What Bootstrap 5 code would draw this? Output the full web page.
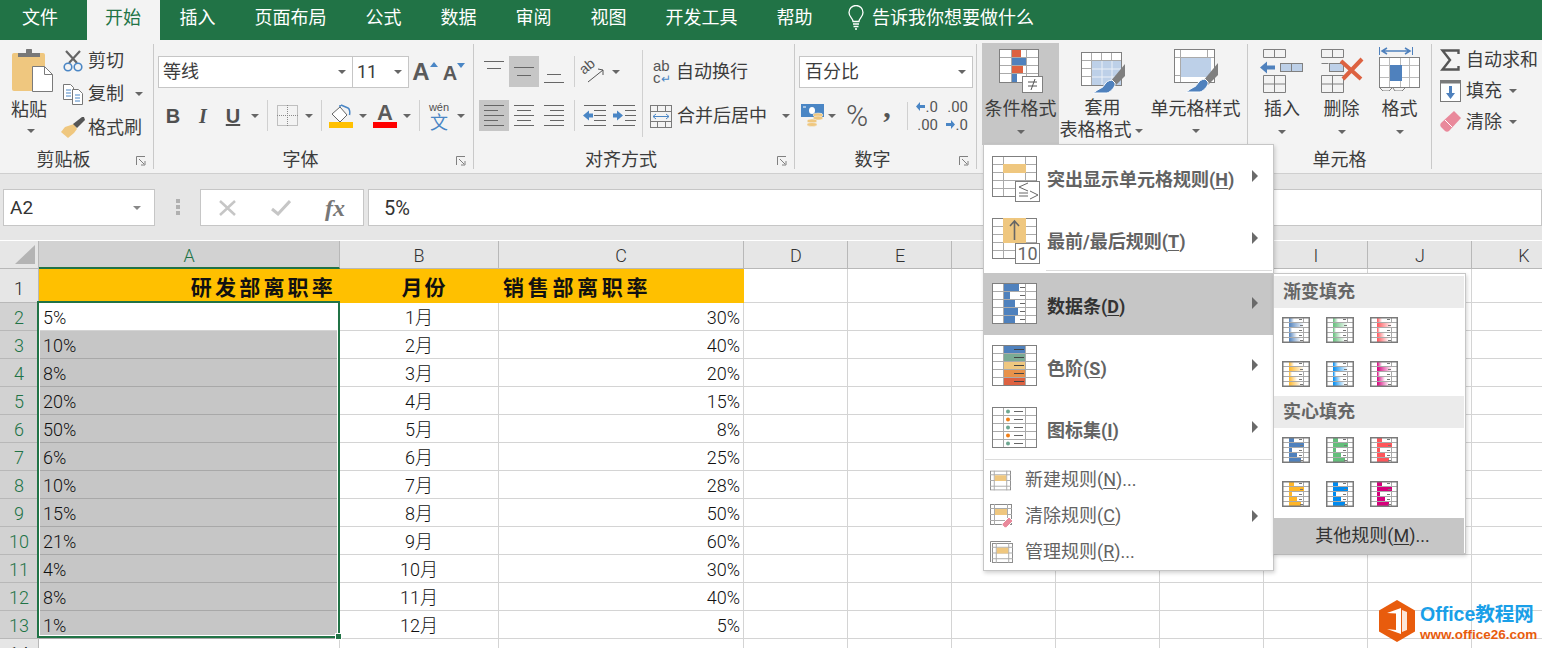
<!DOCTYPE html>
<html lang="zh-CN">
<head>
<meta charset="utf-8">
<title>Excel</title>
<link href="https://cdn.jsdelivr.net/npm/bootstrap@5.3.0/dist/css/bootstrap.min.css" rel="stylesheet">
<style>
html,body{margin:0;background:#fff}
.xl{width:1542px;height:648px;overflow:hidden;position:relative;font-family:Roboto,"Noto Sans CJK SC",sans-serif;font-size:18px;line-height:24px;color:#3c3c3c}
svg{display:block;flex:none}
/* tabs */
.xtabs{height:40px;background:#217346;flex-wrap:nowrap}
.xtabs .nav-link{color:#fff;padding:0 19.5px;line-height:36px;height:40px;border:0;white-space:nowrap}
.xtabs .nav-item:first-child .nav-link{padding:0 29px 0 22px}
.xtabs .nav-link.active{background:#f3f3f3;color:#217346;padding:0 19px 0 18px}
.xbulb{margin:5px 8px 0 16px}
.asktxt{line-height:36px;color:#fff}
/* ribbon */
.xrib{height:134px;background:#f3f3f3;border-bottom:1px solid #cfcfcf}
.rg{height:125px;margin-top:4px;border-right:1px solid #c9c9c9;display:flex;flex-direction:column;flex:none}
.rb{height:101px;display:flex;flex:none}
.rl{height:24px;padding-top:3px;display:grid;grid-template-columns:1fr auto 1fr 26px}
.rl span{grid-column:2}
.rl svg{grid-column:4;justify-self:end;align-self:center;margin:2px 7px 0 0}
.rl.plainlbl{grid-template-columns:1fr auto 1fr}
.g1{width:154px}.g2{width:320px}.g3{width:321px}.g4{width:182px}.g5{width:271px}.g6{width:184px}.g7{width:110px;border-right:0}
.ptcol{width:62px;padding-top:5px}
.ptcol svg{margin-left:12px}
.ptxt{padding-left:11px;line-height:24px;margin-top:6px}
.crb{height:15px;display:flex;justify-content:center;align-items:center;margin-top:3px}
.ptcol .crb{margin-top:1px;width:62px}
.smrow{height:33.5px;display:flex;align-items:center;gap:4px}
.smico{width:22px;display:flex;justify-content:center}
.cr{width:14px;height:31px;display:flex;align-items:center;justify-content:center;flex:none}
.cr.tiny{display:inline-flex;height:16px;vertical-align:middle}
.cr::after,.crb::after{content:"";border-style:solid;border-width:4px 4px 0;border-color:#666 transparent transparent}
.ib{width:30px;height:31px;display:flex;align-items:center;justify-content:center;flex:none;color:#505050}
.ib.on{background:#c6c6c6}
.ib.top{align-items:flex-start;padding-top:5px}
.ib.bot{align-items:flex-end;padding-bottom:4px}
.vs{width:1px;height:31px;background:#d0d0d0;margin:0 4px 0 5px;flex:none}
.r1{padding-top:12px;height:44px;display:flex;align-items:flex-start}
.r2{margin-top:12px;height:31px;display:flex}
.ind{margin-left:4px}
.selbox{height:32px;background:#fff;border:1px solid #c6c6c6;display:flex;align-items:center;justify-content:space-between;padding:0 6px 0 4px;flex:none}
.selbox::after{content:"";border-style:solid;border-width:4px 4px 0;border-color:#666 transparent transparent}
.fbox{width:195px;margin-left:4px}.sbox{width:57px;margin-left:-1px}
.agrow{font-family:"Liberation Sans",sans-serif;font-weight:700;color:#5a5a5a;position:relative}
.agrow svg{margin:-14px -2px 0 0}
.hA{font-size:24px;margin-left:3px;width:24px}.hB{font-size:20px;padding-top:2px;margin-left:4px;width:26px}
.wen{font-size:11px;line-height:12px;text-align:center;color:#505050;font-family:"Liberation Sans",sans-serif}
.wen b{display:block;color:#4a86c5;font-size:18px;line-height:17px;font-weight:400;font-family:"Noto Sans CJK SC",sans-serif}
.bi{font:700 20px/24px "Liberation Sans",sans-serif}
.it{font:italic 700 20px/24px "Liberation Serif",serif}
.un{font:700 20px/24px "Liberation Sans",sans-serif;text-decoration:underline}
.colorA{flex-direction:column}
.colorA span{font:700 22px/18px "Liberation Sans",sans-serif;color:#5a5a5a}
.al3l{width:168px;padding-left:5px}
.al3r{border-left:1px solid #d0d0d0;height:87px;margin-top:6px;padding-left:7px}
.wr{height:32px;margin-top:6px;display:flex;align-items:center;gap:3px;white-space:nowrap}
.wr.m2{margin-top:12px;gap:5px}
.wr.m2 .cr{margin-left:7px}
.wrab{font:15px/12px "Liberation Sans",sans-serif;color:#555;width:20px;margin-left:3px}
.wrab em{font-style:normal;color:#4a86c5;font-size:12px}
.orient{overflow:visible}
.nbox{width:174px;margin:12px 0 0 4px;padding-left:5px}
.nrow{margin:12px 0 0 6px;display:flex;height:31px;align-items:center}
.pc{font:300 30px/31px Roboto,sans-serif;color:#555;width:24px;margin-left:6px;text-align:center}
.cm{font:700 30px/14px "Liberation Serif",serif;color:#555;width:36px;text-align:center;height:31px}
.dec{font:15px/18px Roboto,sans-serif;color:#555;width:24px;display:flex;flex-direction:column;align-items:flex-end;margin-left:6px}
.dec span{display:flex;align-items:center;gap:1px;height:18px}
.dvs{width:1px;height:28px;background:#d0d0d0;margin-left:2px}
.bigb{display:flex;flex-direction:column;align-items:center;flex:none;height:101px;padding-top:5px;text-align:center}
.bigb.on{background:#c6c6c6;margin-top:-1px;height:102px;padding-top:6px}
.b1{width:77px;margin-left:5px}.b2{width:87px}.b3{width:99px}
.bico{height:44px;margin-bottom:4px;display:flex;align-items:flex-start}
.b2 .bico{padding-top:3px}
.ln2{white-space:nowrap;line-height:22px}
.b3 .crb{margin-top:2px}
.c1{width:60px;margin-left:4px}.c2{width:59px}.c3{width:57px}
.c3 svg{margin-top:-2px}
.tx3 .smrow{gap:5px;padding-left:7px;height:31px}
.tx3 .smrow:first-child{height:32px}
.tx3 .smrow:nth-child(2){height:30px}
.smcar{margin-left:-1px}
/* formula bar */
.xfb{height:66px;background:#e6e6e6;padding:15px 0 0 3px;display:flex}
.fb-b{height:37px;background:#fff;border:1px solid #c6c6c6;display:flex;align-items:center;flex:none}
.nm{width:152px;padding:0 13px 0 6px;justify-content:space-between;font-size:19px;color:#333}
.nm::after{content:"";border-style:solid;border-width:4px 4px 0;border-color:#888 transparent transparent}
.dots{width:45px;height:35px;display:flex;justify-content:center;align-items:center}
.fx{width:164px;padding-left:18px;gap:34px}
.fxt{font:italic 700 24px/24px "Liberation Serif",serif;color:#777}
.fi{flex:1;margin-left:4px;padding-left:15px;font-size:20px;color:#333}
/* sheet */
.sh{position:relative;height:408px;overflow:hidden;font-weight:300}
.gr{display:flex;height:28px;line-height:29px;color:#111}
.ghead{height:28px;margin-top:1px;line-height:30px;background:#e6e6e6;color:#333}
.ghead>div{border-right:1px solid #b8b8b8;border-bottom:1px solid #b8b8b8;text-align:center}
.r-h{width:39px;flex:none;background:#d2d2d2;color:#217346;text-align:center;border-right:1px solid #b8b8b8;border-bottom:1px solid #b8b8b8}
.r-h.plain{background:#e6e6e6;color:#222}
.ghead .r-h{background:#e6e6e6;display:flex;align-items:flex-end;justify-content:flex-end;padding:0 3px 4px 0}
.ghead .ca{background:#d2d2d2;color:#217346;border-bottom:2px solid #217346;padding:0}
.ghead .cc{padding:0;text-align:center}
.ca{width:301px;flex:none;padding-left:4px}
.cb{width:159px;flex:none;text-align:center}
.cc{width:245px;flex:none;text-align:right;padding-right:3px}
.rest{width:832px;flex:none}
.cs{height:28px;width:104px;flex:none}
.gd>div{border-right:1px solid #d4d4d4;border-bottom:1px solid #d4d4d4}
.gd .r-h{border-right-color:#b8b8b8;border-bottom-color:#b8b8b8}
.gd.dk .ca{background:#c6c6c6;border-bottom-color:#a8a8a8;border-right-color:#c6c6c6}
.rest{background:repeating-linear-gradient(90deg,transparent 0 103px,#d4d4d4 103px 104px)}
.ghead .rest{background:repeating-linear-gradient(90deg,transparent 0 103px,#b8b8b8 103px 104px);border-right:0;display:flex}
.gd .rest{border-right:0}
.gt{height:34px;line-height:38px;font-weight:700;color:#111;letter-spacing:3.2px;font-size:21px}
.gt .ca,.gt .cb,.gt .cc{background:#ffc000;border-color:#ffc000}
.gt .ca{text-align:right;padding:0 3px 0 0}
.gt .cb{letter-spacing:2px;padding-left:11px}
.gt .cc{text-align:left;padding-left:4px;letter-spacing:3.7px}
.gt .r-h{letter-spacing:0;font-size:18px;line-height:40px;font-weight:300}
.selr{position:absolute;left:37px;top:61px;width:303px;height:337px;border:2px solid #217346;outline:1px solid #fff;outline-offset:-3px;pointer-events:none}
.hdl{position:absolute;right:-4px;bottom:-4px;width:7px;height:7px;background:#217346;border:1px solid #fff}
/* menus */
.xl .dropdown-menu{position:absolute;display:block;margin:0;min-width:0;padding:1px 0 0;border:1px solid #c6c6c6;border-radius:0;background:#fff;box-shadow:1px 2px 4px rgba(0,0,0,.18);font-size:18px}
.m1{left:983px;top:144px;width:291px;height:427px}
.m2s{left:1273px;top:273px;width:193px;height:281px}
.xl .dropdown-item{padding:0;display:flex;color:#636363;white-space:nowrap;position:relative;background:transparent}
.bigi{height:62px;font-weight:700}
.xl .bigi.hov{background:#c6c6c6;color:#333}
.bigi>svg{margin:10px 7px 0 8px}
.bigi>svg text{font-weight:400}
.bigi>span{margin-top:22px}
.xl u{text-decoration:underline;text-underline-offset:2px}
.arr{margin:24px 15px 0 auto;width:0;height:0;border-style:solid;border-width:6px 0 6px 6px;border-color:transparent transparent transparent #6a6a6a}
.sepa{height:1px;background:#dcdcdc;margin:0 1px 2px 62px}
.sepb{height:1px;background:#dcdcdc;margin:0 1px 2px 1px}
.smi{height:36px;align-items:center;font-weight:400}
.smi>svg{margin:0 14px 0 6px}
.smi>svg.w24{margin-right:11px}
.smi>svg.w23{margin-right:12px}
.smi .arr{margin:0 15px 0 auto}
.mh{height:32px;line-height:32px;background:#ebebeb;color:#666;font-weight:700;padding-left:9px;margin:1px 1px 0 0}
.mh.nx{margin-top:0}
.mgrid{display:grid;grid-template-columns:repeat(3,28px);gap:18px 16px;padding:9px 8px}
.more{height:36px;background:#c6c6c6;margin:2px 1px 0 0;text-align:center;line-height:36px;color:#333;padding-left:7px}
/* watermark */
.wm{position:absolute;left:1379px;top:600px;display:flex;gap:5px;height:42px}
.wm1{font:700 19.5px/26px "Liberation Sans","Noto Sans CJK SC",sans-serif;color:#1a9fe8;margin-top:1px;white-space:nowrap}
.wm2{font:700 13.5px/15px "Liberation Sans",sans-serif;color:#e85c0d;white-space:nowrap}
</style>
</head>
<body>
<svg width="0" height="0" class="position-absolute">
<defs>
<linearGradient id="g1"><stop offset="0" stop-color="#4f81bd"/><stop offset="1" stop-color="#fff"/></linearGradient>
<linearGradient id="g2"><stop offset="0" stop-color="#63be7b"/><stop offset="1" stop-color="#fff"/></linearGradient>
<linearGradient id="g3"><stop offset="0" stop-color="#ff555a"/><stop offset="1" stop-color="#fff"/></linearGradient>
<linearGradient id="g4"><stop offset="0" stop-color="#ffb628"/><stop offset="1" stop-color="#fff"/></linearGradient>
<linearGradient id="g5"><stop offset="0" stop-color="#008aef"/><stop offset="1" stop-color="#fff"/></linearGradient>
<linearGradient id="g6"><stop offset="0" stop-color="#d6007b"/><stop offset="1" stop-color="#fff"/></linearGradient>
<symbol id="mini" viewBox="0 0 28 26">
<path d="M.5 5.500h27M.5 10.500h27M.5 15.500h27M.5 20.500h27M7.500 0v26M21.500 0v26" stroke="#aaa" fill="none"/>
<rect x="7" y="1" width="5" height="4"/><rect x="7" y="6" width="15" height="4"/><rect x="7" y="11" width="3" height="4"/><rect x="7" y="16" width="8" height="4"/><rect x="7" y="21" width="12" height="4"/>
<path d="M17 2.500h3M18 8.500h3M17 13.500h3M17 18.500h3M18 23.500h3" stroke="#777" fill="none"/>
<rect x=".75" y=".75" width="26.500" height="24.500" fill="none" stroke="#7a7a7a" stroke-width="1.500"/>
</symbol>
<symbol id="tb" viewBox="0 0 45 41">
<rect x=".5" y=".5" width="44" height="40" fill="#fff"/>
<path d="M0 8.500h45M0 16.500h45M0 24.500h45M0 32.500h45M11.500 0v41M33.500 0v41" stroke="#aaa"/>
<rect x=".5" y=".5" width="44" height="40" fill="none" stroke="#7f7f7f"/>
</symbol>
<symbol id="sm" viewBox="0 0 22 21">
<rect x=".5" y=".5" width="21" height="20" fill="#fff" stroke="#8a8a8a"/>
<path d="M0 4.500h22M0 10.500h22M0 16.500h22M4.500 0v21M17.500 0v21" stroke="#aaa"/>
<rect x="5" y="5" width="12" height="6" fill="#efc77f"/>
</symbol>
</defs>
</svg>
<div class="xl">
<ul class="nav xtabs">
<li class="nav-item"><a class="nav-link" href="#">文件</a></li>
<li class="nav-item"><a class="nav-link active" href="#">开始</a></li>
<li class="nav-item"><a class="nav-link" href="#">插入</a></li>
<li class="nav-item"><a class="nav-link" href="#">页面布局</a></li>
<li class="nav-item"><a class="nav-link" href="#">公式</a></li>
<li class="nav-item"><a class="nav-link" href="#">数据</a></li>
<li class="nav-item"><a class="nav-link" href="#">审阅</a></li>
<li class="nav-item"><a class="nav-link" href="#">视图</a></li>
<li class="nav-item"><a class="nav-link" href="#">开发工具</a></li>
<li class="nav-item"><a class="nav-link" href="#">帮助</a></li>
<li class="nav-item d-flex"><svg class="xbulb" width="16" height="25" viewBox="0 0 16 25" fill="none" stroke="#fff" stroke-width="1.300"><path d="M5 16.500C5 13.500 1 12 1 7.500a7 7 0 0 1 14 0c0 4.500-4 6-4 9z"/><path d="M5 19h6M5.500 21.500h5M7 24h2"/></svg><span class="asktxt">告诉我你想要做什么</span></li>
</ul>

<div class="xrib d-flex">
 <div class="rg g1">
  <div class="rb">
   <div class="ptcol">
    <svg width="41" height="43" viewBox="0 0 41 43"><rect x="0" y="4" width="33" height="38" rx="2" fill="#efc77f"/><path d="M6 8V4h8V1.500a3 3 0 0 1 6 0V4h8v4z" fill="#787878"/><path d="M20.500 17.500h12l8 8v17h-20z" fill="#fff" stroke="#7a7a7a"/><path d="M32.500 17.500v8h8" fill="none" stroke="#7a7a7a"/></svg>
    <div class="ptxt">粘贴</div>
    <div class="crb"></div>
   </div>
   <div>
    <div class="smrow"><span class="smico"><svg width="20" height="22" viewBox="0 0 20 22" fill="none"><path d="M3 1l11 12M17 1L6 13" stroke="#666" stroke-width="2.200"/><circle cx="5" cy="17" r="3.800" stroke="#4a86c5" stroke-width="1.600"/><circle cx="15" cy="17" r="3.800" stroke="#4a86c5" stroke-width="1.600"/></svg></span>剪切</div>
    <div class="smrow"><span class="smico"><svg width="20" height="21" viewBox="0 0 20 21" fill="#fff" stroke="#777"><path d="M.5.5h7l3 3v12H.5z"/><path d="M9.500 5.500h6l4 4v11h-10z"/><path d="M3 6h5M3 9h5M3 12h5M12 11h5M12 14h5M12 17h5" stroke="#4a86c5"/></svg></span>复制<span class="cr ms-1"></span></div>
    <div class="smrow"><span class="smico"><svg width="24" height="21" viewBox="0 0 24 21"><path d="M13 7L4 10l-4 5 7 6 6-5 3-4z" fill="#efc77f"/><path d="M12 7l4 4 8-8-1-3h-2z" fill="#555"/></svg></span>格式刷</div>
   </div>
  </div>
  <div class="rl"><span>剪贴板</span><svg width="10" height="10" viewBox="0 0 10 10" fill="none" stroke="#808080"><path d="M.5 9V.5H9"/><path d="M3 3l5 5M9 5v4H5"/></svg></div>
 </div>

 <div class="rg g2">
  <div class="rb flex-column">
   <div class="r1">
    <div class="selbox fbox"><span>等线</span></div>
    <div class="selbox sbox"><span>11</span></div>
    <div class="ib agrow hA">A<svg width="8" height="5" viewBox="0 0 8 5"><path d="M0 5l4-5 4 5z" fill="#4a86c5"/></svg></div>
    <div class="ib agrow hB">A<svg width="8" height="5" viewBox="0 0 8 5"><path d="M0 0l4 5 4-5z" fill="#4a86c5"/></svg></div>
   </div>
   <div class="r2 ind">
    <div class="ib bi">B</div><div class="ib it">I</div><div class="ib un">U</div><div class="cr"></div>
    <div class="vs"></div>
    <div class="ib"><svg width="21" height="21" viewBox="0 0 21 21" fill="none" stroke="#8a8a8a" stroke-dasharray="1 1"><path d="M.5.5h20v20H.5zM10.500 0v21M0 10.500h21"/></svg></div><div class="cr"></div>
    <div class="vs"></div>
    <div class="ib"><svg width="24" height="24" viewBox="0 0 24 24"><path d="M3 10l8-7 7 8-7 7z" fill="#fff" stroke="#666"/><path d="M11 3V1M12 1l7 3c2 1 2 5 1.500 7" fill="none" stroke="#4a86c5" stroke-width="1.500"/><rect y="18" width="24" height="6" fill="#ffc000"/></svg></div><div class="cr"></div>
    <div class="ib colorA"><span>A</span><svg width="24" height="6"><rect width="24" height="6" fill="#f00"/></svg></div><div class="cr"></div>
    <div class="vs"></div>
    <div class="ib"><div class="wen">wén<b>文</b></div></div><div class="cr"></div>
   </div>
  </div>
  <div class="rl"><span>字体</span><svg width="10" height="10" viewBox="0 0 10 10" fill="none" stroke="#808080"><path d="M.5 9V.5H9"/><path d="M3 3l5 5M9 5v4H5"/></svg></div>
 </div>

 <div class="rg g3">
  <div class="rb">
   <div class="al3l">
    <div class="r1">
     <div class="ib top"><svg width="20" height="8" viewBox="0 0 20 8" stroke="#666"><path d="M0 .5h20M3 7.500h14"/></svg></div>
     <div class="ib on"><svg width="20" height="9" viewBox="0 0 20 9" stroke="#666"><path d="M0 .5h20M3 8.500h14"/></svg></div>
     <div class="ib bot"><svg width="20" height="9" viewBox="0 0 20 9" stroke="#666"><path d="M3 .5h14M0 8.500h20"/></svg></div>
     <div class="vs"></div>
     <div class="ib"><svg class="orient" width="22" height="22" viewBox="0 0 22 22"><text font-size="14" fill="#555" font-family="Liberation Sans" transform="translate(1 14) rotate(-40)">ab</text><path d="M5 21L20 9M15 8l5 1v5" fill="none" stroke="#555"/></svg></div><div class="cr"></div>
    </div>
    <div class="r2">
     <div class="ib on"><svg width="20" height="21" viewBox="0 0 20 21" stroke="#666"><path d="M0 .5h20M0 5.500h14M0 10.500h20M0 15.500h14M0 20.500h20"/></svg></div>
     <div class="ib"><svg width="20" height="21" viewBox="0 0 20 21" stroke="#666"><path d="M0 .5h20M3 5.500h14M0 10.500h20M3 15.500h14M0 20.500h20"/></svg></div>
     <div class="ib"><svg width="20" height="21" viewBox="0 0 20 21" stroke="#666"><path d="M0 .5h20M6 5.500h14M0 10.500h20M6 15.500h14M0 20.500h20"/></svg></div>
     <div class="vs"></div>
     <div class="ib"><svg width="23" height="21" viewBox="0 0 23 21"><path d="M1 .5h22M11 5.500h12M11 10.500h12M11 15.500h12M1 20.500h22" stroke="#666"/><path d="M0 10.500l6-5v3h4v4H6v3z" fill="#4a86c5"/></svg></div>
     <div class="ib"><svg width="23" height="21" viewBox="0 0 23 21"><path d="M0 .5h22M12 5.500h11M12 10.500h11M12 15.500h11M0 20.500h22" stroke="#666"/><path d="M10 10.500l-6-5v3H0v4h4v3z" fill="#4a86c5"/></svg></div>
    </div>
   </div>
   <div class="al3r">
    <div class="wr"><div class="wrab">ab<br>c<em>↵</em></div>自动换行</div>
    <div class="wr m2"><svg width="22" height="23" viewBox="0 0 22 23" fill="none"><rect x=".5" y=".5" width="21" height="22" stroke="#7a7a7a"/><path d="M0 6.500h22M0 16.500h22M7.500 0v6M15.500 0v6M7.500 17v6M15.500 17v6" stroke="#7a7a7a"/><path d="M3 11.500h16M6 9l-3 2.500L6 14M16 9l3 2.500-3 2.500" stroke="#4a86c5"/></svg>合并后居中<span class="cr"></span></div>
   </div>
  </div>
  <div class="rl"><span>对齐方式</span><svg width="10" height="10" viewBox="0 0 10 10" fill="none" stroke="#808080"><path d="M.5 9V.5H9"/><path d="M3 3l5 5M9 5v4H5"/></svg></div>
 </div>

 <div class="rg g4">
  <div class="rb flex-column">
   <div class="selbox nbox"><span>百分比</span></div>
   <div class="nrow">
    <svg width="24" height="23" viewBox="0 0 24 23"><rect width="23" height="13" fill="#4a86c5"/><ellipse cx="11" cy="6.500" rx="3" ry="3.500" fill="#fff"/><path d="M2 3h3M18 10h3" stroke="#fff"/><g fill="#efc77f" stroke="#f3f3f3" stroke-width=".5"><ellipse cx="17" cy="11" rx="5" ry="2"/><ellipse cx="17" cy="14" rx="5" ry="2"/><ellipse cx="11" cy="17" rx="5" ry="2"/><ellipse cx="11" cy="20.500" rx="5" ry="2"/></g></svg>
    <span class="cr"></span>
    <span class="pc">%</span><span class="cm">,</span><span class="dvs"></span>
    <span class="dec"><span><svg width="9" height="9" viewBox="0 0 9 9"><path d="M0 4.500L4 0v3h5v3H4v3z" fill="#4a86c5"/></svg>.0</span><span>.00</span></span>
    <span class="dec"><span>.00</span><span><svg width="9" height="9" viewBox="0 0 9 9"><path d="M9 4.500L5 0v3H0v3h5v3z" fill="#4a86c5"/></svg>.0</span></span>
   </div>
  </div>
  <div class="rl"><span>数字</span><svg width="10" height="10" viewBox="0 0 10 10" fill="none" stroke="#808080"><path d="M.5 9V.5H9"/><path d="M3 3l5 5M9 5v4H5"/></svg></div>
 </div>

 <div class="rg g5">
  <div class="rb">
   <div class="bigb b1 on">
    <div class="bico"><svg width="44" height="44" viewBox="0 0 44 44"><rect x=".5" y=".5" width="39" height="33" fill="#fff"/><path d="M0 8.500h40M0 16.500h40M0 24.500h40M12.500 0v33M27.500 0v33" stroke="#aaa"/><rect x="13" y="1" width="9" height="7" fill="#dd6241"/><rect x="13" y="9" width="14" height="7" fill="#4f81bd"/><rect x="13" y="17" width="11" height="7" fill="#dd6241"/><rect x="13" y="25" width="5" height="8" fill="#4f81bd"/><rect x=".5" y=".5" width="39" height="33" fill="none" stroke="#808080"/><rect x="23.500" y="27.500" width="20" height="16" fill="#fff" stroke="#808080"/><path d="M29 33h9M29 37h9M36 30l-4 11" stroke="#555" fill="none"/></svg></div>
    <span>条件格式</span><div class="crb"></div>
   </div>
   <div class="bigb b2">
    <div class="bico"><svg width="44" height="42" viewBox="0 0 44 42"><rect x=".5" y=".5" width="40" height="33" fill="#fff"/><path d="M0 8.500h41M0 16.500h41M0 24.500h41M10.500 0v34M20.500 0v34M30.500 0v34" stroke="#aaa"/><rect x="11" y="9" width="30" height="25" fill="#bdd0e8"/><path d="M21 9v25M31 9v25M11 17h30M11 25h30" stroke="#fff" opacity=".7"/><rect x=".5" y=".5" width="40" height="33" fill="none" stroke="#808080"/><path d="M44 12v12l-10 10-5-4z" fill="#7f7f7f"/><path d="M31 28c-8 1-7 7-11 8-2 1-8 5-8 5h14c4-1 9-7 8-10z" fill="#4f81bd" stroke="#fff"/></svg></div>
    <span class="ln2">套用</span><span class="ln2">表格格式<span class="cr tiny"></span></span>
   </div>
   <div class="bigb b3">
    <div class="bico"><svg width="44" height="44" viewBox="0 0 44 44"><rect x=".5" y=".5" width="40" height="33" fill="#fff"/><path d="M0 8.500h41M0 26.500h41M6.500 0v34M33.500 0v34" stroke="#aaa"/><rect x="7" y="9" width="30" height="19" fill="#bdd0e8"/><rect x=".5" y=".5" width="40" height="33" fill="none" stroke="#808080"/><path d="M44 14v12l-10 10-5-4z" fill="#7f7f7f"/><path d="M31 30c-8 1-7 7-11 8-2 1-8 5-8 5h14c4-1 9-7 8-10z" fill="#4f81bd" stroke="#fff"/></svg></div>
    <span>单元格样式</span><div class="crb"></div>
   </div>
  </div>
 </div>

 <div class="rg g6">
  <div class="rb">
   <div class="bigb c1">
    <div class="bico"><svg width="44" height="44" viewBox="0 0 44 44" fill="none"><path d="M3.500.5h22v8h-22zM14.500.5v8M3.500 26.500h22v17h-22zM3.500 35h22M14.500 26v18" stroke="#808080"/><path d="M0 18.500l7-6v4h8v4H7v4z" fill="#4f81bd"/><rect x="20.500" y="14.500" width="22" height="8" fill="#bdd0e8" stroke="#808080"/><path d="M31.500 14v9" stroke="#808080"/></svg></div>
    <span>插入</span><div class="crb"></div>
   </div>
   <div class="bigb c2">
    <div class="bico"><svg width="44" height="44" viewBox="0 0 44 44" fill="none"><path d="M1.500.5h22v8h-22zM12.500.5v8M1.500 26.500h22v17h-22zM1.500 35h22M12.500 26v18M1.500 14.500h7" stroke="#808080"/><rect x="9.500" y="14.500" width="14" height="8" fill="#bdd0e8" stroke="#808080"/><path d="M21 12l20 18M42 10L23 30" stroke="#dd6241" stroke-width="4"/></svg></div>
    <span>删除</span><div class="crb"></div>
   </div>
   <div class="bigb c3">
    <div class="bico"><svg width="42" height="44" viewBox="0 0 42 44" fill="none"><path d="M.5 0v8M33.500 0v8" stroke="#4f81bd"/><path d="M4 4h26M8 1L3 4l5 3M26 1l5 3-5 3" stroke="#4f81bd" stroke-width="1.500"/><rect x=".5" y="10.500" width="40" height="30" fill="#fff"/><path d="M0 18.500h41M0 30.500h41M10.500 10v31M21.500 10v31M30.500 10v31" stroke="#bbb"/><rect x="11" y="18" width="12" height="16" fill="#4f81bd"/><rect x=".5" y="10.500" width="40" height="30" stroke="#808080"/><path d="M1 41l3 3h6l3-3M14 41l2 3h7l3-3" stroke="#808080"/></svg></div>
    <span>格式</span><div class="crb"></div>
   </div>
  </div>
  <div class="rl plainlbl"><span>单元格</span></div>
 </div>

 <div class="rg g7">
  <div class="tx3">
   <div class="smrow"><span class="smico"><svg width="20" height="22" viewBox="0 0 20 22" fill="none" stroke="#555" stroke-width="2.400"><path d="M18.500 5V1.500H2.500L10 11 2.500 20.500h16V17"/></svg></span>自动求和</div>
   <div class="smrow"><span class="smico"><svg width="21" height="22" viewBox="0 0 21 22"><rect x=".5" y=".5" width="20" height="21" fill="#fff" stroke="#7a7a7a"/><rect width="21" height="3.500" fill="#7a7a7a"/><path d="M9 6h3v7h3l-4.500 6L6 13h3z" fill="#4f81bd"/></svg></span>填充<span class="cr smcar"></span></div>
   <div class="smrow"><span class="smico"><svg width="21" height="21" viewBox="0 0 21 21"><path d="M14 0l7 7L9 20c-1 1-3 1-4 0l-4-4c-1-1-1-3 0-4z" fill="#e9899b"/><path d="M5 9l7 7" stroke="#fff"/></svg></span>清除<span class="cr smcar"></span></div>
  </div>
 </div>
</div>

<div class="xfb">
 <div class="fb-b nm">A2</div>
 <div class="dots"><svg width="4" height="16" viewBox="0 0 4 16" fill="#b0b0b0"><rect width="4" height="4"/><rect y="6" width="4" height="4"/><rect y="12" width="4" height="4"/></svg></div>
 <div class="fb-b fx">
  <svg width="18" height="16" viewBox="0 0 18 16" stroke="#c6c6c6" stroke-width="2.500"><path d="M1 1l15 14M16 1L1 15"/></svg>
  <svg width="20" height="16" viewBox="0 0 20 16" fill="none" stroke="#c6c6c6" stroke-width="3"><path d="M1 9l6 5L19 1"/></svg>
  <span class="fxt">fx</span>
 </div>
 <div class="fb-b fi">5%</div>
</div>

<div class="sh">
 <div class="gr ghead">
  <div class="r-h"><svg width="20" height="19" viewBox="0 0 20 19"><path d="M20 0v19H0z" fill="#b4b4b4"/></svg></div>
  <div class="ca">A</div><div class="cb">B</div><div class="cc">C</div>
  <div class="rest">
   <span class="cs">D</span><span class="cs">E</span><span class="cs"></span><span class="cs"></span><span class="cs"></span><span class="cs">I</span><span class="cs">J</span><span class="cs">K</span>
  </div>
 </div>
 <div class="gr gd gt"><div class="r-h plain">1</div><div class="ca">研发部离职率</div><div class="cb">月份</div><div class="cc">销售部离职率</div><div class="rest"></div></div>
 <div class="gr gd"><div class="r-h">2</div><div class="ca">5%</div><div class="cb">1月</div><div class="cc">30%</div><div class="rest"></div></div>
 <div class="gr gd dk"><div class="r-h">3</div><div class="ca">10%</div><div class="cb">2月</div><div class="cc">40%</div><div class="rest"></div></div>
 <div class="gr gd dk"><div class="r-h">4</div><div class="ca">8%</div><div class="cb">3月</div><div class="cc">20%</div><div class="rest"></div></div>
 <div class="gr gd dk"><div class="r-h">5</div><div class="ca">20%</div><div class="cb">4月</div><div class="cc">15%</div><div class="rest"></div></div>
 <div class="gr gd dk"><div class="r-h">6</div><div class="ca">50%</div><div class="cb">5月</div><div class="cc">8%</div><div class="rest"></div></div>
 <div class="gr gd dk"><div class="r-h">7</div><div class="ca">6%</div><div class="cb">6月</div><div class="cc">25%</div><div class="rest"></div></div>
 <div class="gr gd dk"><div class="r-h">8</div><div class="ca">10%</div><div class="cb">7月</div><div class="cc">28%</div><div class="rest"></div></div>
 <div class="gr gd dk"><div class="r-h">9</div><div class="ca">15%</div><div class="cb">8月</div><div class="cc">50%</div><div class="rest"></div></div>
 <div class="gr gd dk"><div class="r-h">10</div><div class="ca">21%</div><div class="cb">9月</div><div class="cc">60%</div><div class="rest"></div></div>
 <div class="gr gd dk"><div class="r-h">11</div><div class="ca">4%</div><div class="cb">10月</div><div class="cc">30%</div><div class="rest"></div></div>
 <div class="gr gd dk"><div class="r-h">12</div><div class="ca">8%</div><div class="cb">11月</div><div class="cc">40%</div><div class="rest"></div></div>
 <div class="gr gd dk"><div class="r-h">13</div><div class="ca">1%</div><div class="cb">12月</div><div class="cc">5%</div><div class="rest"></div></div>
 <div class="gr gd"><div class="r-h plain">14</div><div class="ca"></div><div class="cb"></div><div class="cc"></div><div class="rest"></div></div>
 <div class="selr"><div class="hdl"></div></div>
</div>

<div class="dropdown-menu m1">
 <a class="dropdown-item bigi" href="#"><svg width="48" height="46" viewBox="0 0 48 46"><use href="#tb" width="45" height="41"/><rect x="11" y="8" width="23" height="9" fill="#efc77f"/><rect x="23.500" y="25.500" width="24" height="20" fill="#fff" stroke="#808080"/><path d="M36 27l-9 4 9 4M27 37h9M27 40h9M38 35l8 4-8 4" fill="none" stroke="#666"/></svg><span>突出显示单元格规则(<u>H</u>)</span><i class="arr"></i></a>
 <a class="dropdown-item bigi" href="#"><svg width="48" height="46" viewBox="0 0 48 46"><use href="#tb" width="45" height="41"/><rect x="11" y="0" width="23" height="25" fill="#efc77f"/><path d="M22.500 3v19M18 8l4.500-5L27 8" fill="none" stroke="#666" stroke-width="1.600"/><rect x="23.500" y="25.500" width="24" height="20" fill="#fff" stroke="#808080"/><text x="35.500" y="42" text-anchor="middle" font-size="18" fill="#666" font-family="Roboto">10</text></svg><span>最前/最后规则(<u>T</u>)</span><i class="arr"></i></a>
 <div class="sepa"></div>
 <a class="dropdown-item bigi hov" href="#"><svg width="48" height="46" viewBox="0 0 48 46"><use href="#tb" width="45" height="41"/><g fill="#4f81bd"><rect x="12" y="1" width="15" height="7"/><rect x="12" y="9" width="6" height="7"/><rect x="12" y="17" width="11" height="7"/><rect x="12" y="25" width="14" height="7"/><rect x="12" y="33" width="11" height="7"/></g><path d="M28 4.500h5M28 12.500h5M28 20.500h5M28 28.500h5M28 36.500h5" stroke="#666"/></svg><span>数据条(<u>D</u>)</span><i class="arr"></i></a>
 <a class="dropdown-item bigi" href="#"><svg width="48" height="46" viewBox="0 0 48 46"><use href="#tb" width="45" height="41"/><rect x="12" y="1" width="21" height="7" fill="#4f81bd"/><rect x="12" y="9" width="21" height="7" fill="#7aab94"/><rect x="12" y="17" width="21" height="7" fill="#efc77f"/><rect x="12" y="25" width="21" height="7" fill="#e8924a"/><rect x="12" y="33" width="21" height="7" fill="#dd6241"/><path d="M22 4.500h10M22 12.500h10M22 20.500h10M22 28.500h10M22 36.500h10" stroke="#444"/></svg><span>色阶(<u>S</u>)</span><i class="arr"></i></a>
 <a class="dropdown-item bigi" href="#"><svg width="48" height="46" viewBox="0 0 48 46"><use href="#tb" width="45" height="41"/><circle cx="16" cy="4.500" r="2" fill="#6ea892"/><circle cx="16" cy="12.500" r="2" fill="#f07f17"/><circle cx="16" cy="20.500" r="2" fill="#6ea892"/><circle cx="16" cy="28.500" r="2" fill="#f07f17"/><circle cx="16" cy="36.500" r="2" fill="#6ea892"/><path d="M22 4.500h9M22 12.500h9M22 20.500h9M22 28.500h9M22 36.500h9" stroke="#666"/></svg><span>图标集(<u>I</u>)</span><i class="arr"></i></a>
 <div class="sepb"></div>
 <a class="dropdown-item smi" href="#"><svg width="21" height="21" viewBox="0 0 22 21"><use href="#sm" width="22" height="21"/></svg><span>新建规则(<u>N</u>)...</span></a>
 <a class="dropdown-item smi" href="#"><svg class="w24" width="24" height="24" viewBox="0 0 24 24"><use href="#sm" width="22" height="21"/><path d="M19 13l4 4-6 6c-1 1-2 1-3 0l-1-1c-1-1-1-2 0-3z" fill="#e9899b" stroke="#fff"/></svg><span>清除规则(<u>C</u>)</span><i class="arr"></i></a>
 <a class="dropdown-item smi" href="#"><svg class="w23" width="23" height="22" viewBox="0 0 23 22"><path d="M.5 21V.5H21" fill="none" stroke="#8a8a8a"/><use href="#sm" x="2" y="2" width="21" height="20"/></svg><span>管理规则(<u>R</u>)...</span></a>
</div>

<div class="dropdown-menu m2s">
 <div class="mh">渐变填充</div>
 <div class="mgrid">
  <svg width="28" height="26" fill="url(#g1)"><use href="#mini"/></svg><svg width="28" height="26" fill="url(#g2)"><use href="#mini"/></svg><svg width="28" height="26" fill="url(#g3)"><use href="#mini"/></svg>
  <svg width="28" height="26" fill="url(#g4)"><use href="#mini"/></svg><svg width="28" height="26" fill="url(#g5)"><use href="#mini"/></svg><svg width="28" height="26" fill="url(#g6)"><use href="#mini"/></svg>
 </div>
 <div class="mh nx">实心填充</div>
 <div class="mgrid">
  <svg width="28" height="26" fill="#4f81bd"><use href="#mini"/></svg><svg width="28" height="26" fill="#63be7b"><use href="#mini"/></svg><svg width="28" height="26" fill="#ff555a"><use href="#mini"/></svg>
  <svg width="28" height="26" fill="#ffb628"><use href="#mini"/></svg><svg width="28" height="26" fill="#008aef"><use href="#mini"/></svg><svg width="28" height="26" fill="#d6007b"><use href="#mini"/></svg>
 </div>
 <div class="more">其他规则(<u>M</u>)...</div>
</div>

<div class="wm">
 <svg width="36" height="42" viewBox="0 0 36 42"><path d="M18 0l18 10.500v21L18 42 0 31.500v-21z" fill="#e85c0d"/><path d="M8 13l14-5v26L8 29l9 1V13.500z" fill="#fff"/><path d="M23 10l5 2v18l-5 2z" fill="#fff" opacity=".85"/></svg>
 <div><div class="wm1">Office教程网</div><div class="wm2">www.office26.com</div></div>
</div>
</div>
<script src="https://cdn.jsdelivr.net/npm/bootstrap@5.3.0/dist/js/bootstrap.bundle.min.js"></script>
</body>
</html>
